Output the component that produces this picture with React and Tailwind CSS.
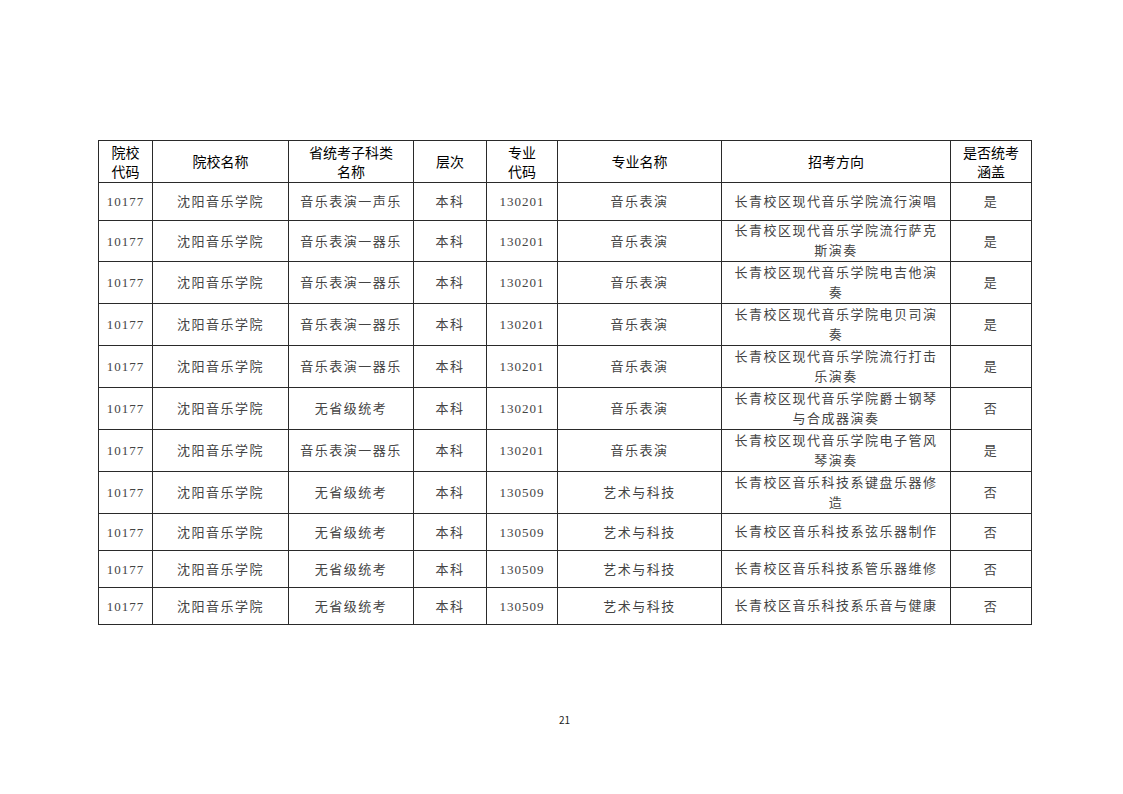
const cols = [54, 136, 125, 73, 71, 164, 229, 81];

const rows = [
  ["音乐表演一声乐", "130201", "音乐表演", "长青校区现代音乐学院流行演唱", "是", 38],
  ["音乐表演一器乐", "130201", "音乐表演", "长青校区现代音乐学院流行萨克斯演奏", "是", 41],
  ["音乐表演一器乐", "130201", "音乐表演", "长青校区现代音乐学院电吉他演奏", "是", 42],
  ["音乐表演一器乐", "130201", "音乐表演", "长青校区现代音乐学院电贝司演奏", "是", 42],
  ["音乐表演一器乐", "130201", "音乐表演", "长青校区现代音乐学院流行打击乐演奏", "是", 42],
  ["无省级统考", "130201", "音乐表演", "长青校区现代音乐学院爵士钢琴与合成器演奏", "否", 42],
  ["音乐表演一器乐", "130201", "音乐表演", "长青校区现代音乐学院电子管风琴演奏", "是", 42],
  ["无省级统考", "130509", "艺术与科技", "长青校区音乐科技系键盘乐器修造", "否", 42],
  ["无省级统考", "130509", "艺术与科技", "长青校区音乐科技系弦乐器制作", "否", 37],
  ["无省级统考", "130509", "艺术与科技", "长青校区音乐科技系管乐器维修", "否", 37],
  ["无省级统考", "130509", "艺术与科技", "长青校区音乐科技系乐音与健康", "否", 37],
];

const serif = { fontFamily: '"Liberation Serif", "Noto Sans CJK SC", serif' };

function Head({ children }) {
  return (
    <th className="border border-[#2a2a2a] px-1 py-0 text-center align-middle text-[14px] font-normal leading-[19px] text-black">
      {children}
    </th>
  );
}

function Cell({ children, className = "" }) {
  return (
    <td
      className={`border border-[#2a2a2a] p-0 text-center align-middle text-[13px] leading-[19px] tracking-[1.5px] text-[#444] ${className}`}
    >
      {children}
    </td>
  );
}

export default function App() {
  return (
    <div
      className="flex h-[794px] w-[1123px] flex-col bg-white pl-[98px] pt-[140px]"
      style={{ fontFamily: '"Noto Sans CJK SC", "Noto Sans", sans-serif' }}
    >
      <table className="w-[933px] table-fixed border-collapse">
        <colgroup>
          {cols.map((w, i) => (
            <col key={i} style={{ width: w }} />
          ))}
        </colgroup>
        <thead>
          <tr className="h-[42px]">
            <Head>
              院校
              <br />
              代码
            </Head>
            <Head>院校名称</Head>
            <Head>
              省统考子科类
              <br />
              名称
            </Head>
            <Head>层次</Head>
            <Head>
              专业
              <br />
              代码
            </Head>
            <Head>专业名称</Head>
            <Head>招考方向</Head>
            <Head>
              是否统考
              <br />
              涵盖
            </Head>
          </tr>
        </thead>
        <tbody style={serif}>
          {rows.map(([sub, code, major, dir, yes, h], i) => (
            <tr key={i} style={{ height: h }}>
              <Cell className="tracking-[1px]">10177</Cell>
              <Cell>沈阳音乐学院</Cell>
              <Cell>{sub}</Cell>
              <Cell>本科</Cell>
              <Cell className="tracking-[1px]">{code}</Cell>
              <Cell>{major}</Cell>
              <Cell className="px-[10px] leading-[20px]">{dir}</Cell>
              <Cell>{yes}</Cell>
            </tr>
          ))}
        </tbody>
      </table>
      <div className="mt-[87px] w-[933px] text-center text-[10px] text-[#222]">21</div>
    </div>
  );
}
